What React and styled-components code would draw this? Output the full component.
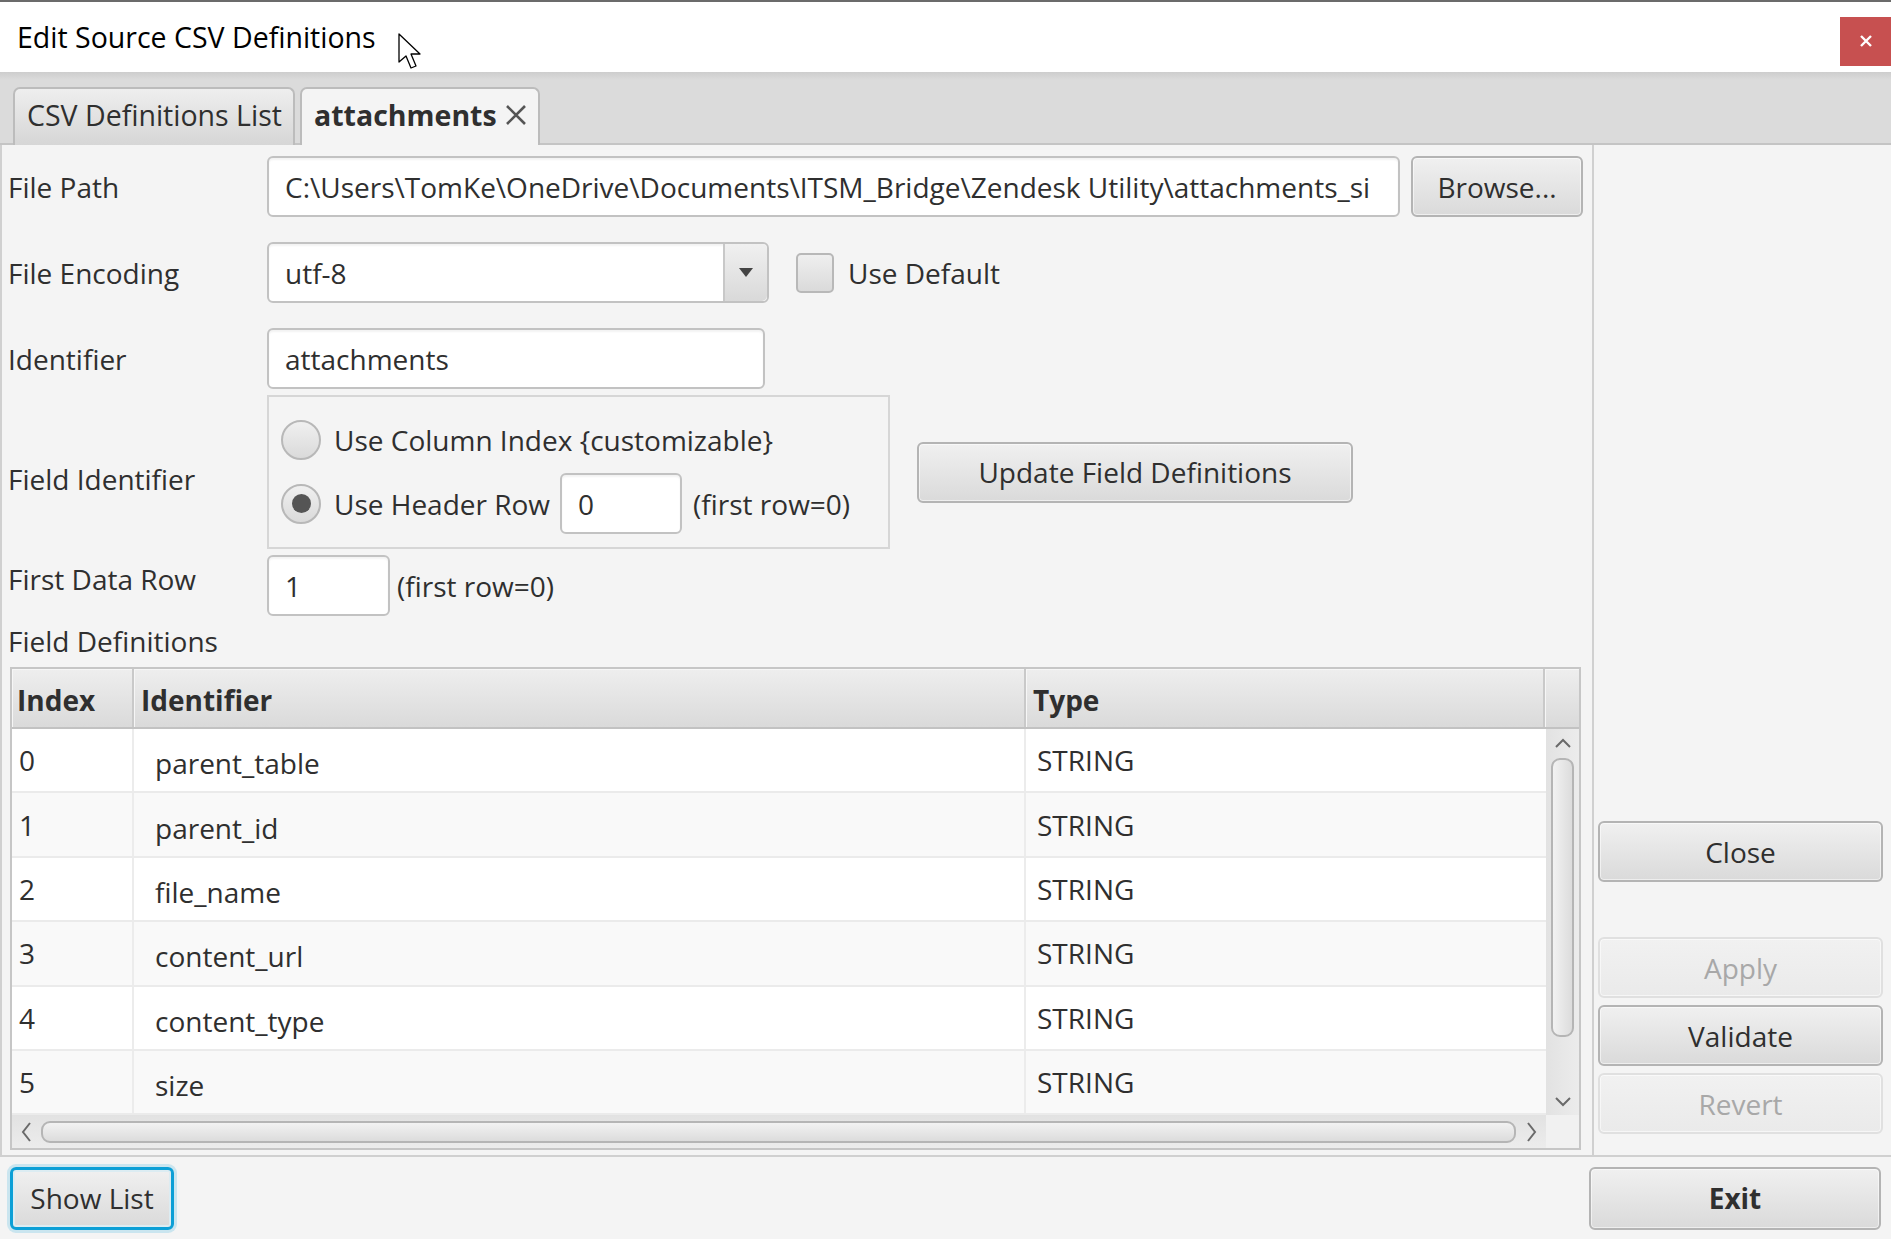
import React from 'react';
import styled, { createGlobalStyle, css } from 'styled-components';

const GlobalStyle = createGlobalStyle`
  html, body {
    margin: 0;
    padding: 0;
  }
  body {
    background: #f4f4f4;
    font-family: "Open Sans", "Noto Sans", sans-serif;
    font-size: 28px;
    color: #2f2f2f;
  }
  * { box-sizing: border-box; }
`;

const Window = styled.div`
  width: 1891px;
  height: 1239px;
  display: flex;
  flex-direction: column;
  border-top: 2px solid #6b6b6b;
  background: #f4f4f4;
  overflow: hidden;
`;

const TitleBar = styled.div`
  position: relative;
  flex: none;
  height: 70px;
  display: flex;
  align-items: center;
  padding-left: 17px;
  background: #fff;
`;

const Title = styled.div`
  flex: 1;
  color: #000;
  font-size: 28.5px;
`;

const WinClose = styled.div`
  width: 51px;
  height: 49px;
  margin-top: 8px;
  display: flex;
  align-items: center;
  justify-content: center;
  background: #c75050;
`;

const Pointer = styled.svg`
  position: absolute;
  left: 398px;
  top: 31px;
`;

const TabStrip = styled.div`
  flex: none;
  height: 73px;
  display: flex;
  align-items: flex-end;
  gap: 5px;
  padding-left: 13px;
  background: linear-gradient(to bottom, #cdcdcd 0px, #dbdbdb 8px, #dbdbdb 100%);
  border-bottom: 2px solid #c4c4c4;
`;

const Tab = styled.div`
  height: 58px;
  margin-bottom: -2px;
  display: flex;
  align-items: center;
  gap: 8px;
  padding: 0 0 4px 12px;
  border: 2px solid #bcbcbc;
  border-bottom: none;
  border-radius: 7px 7px 0 0;
  font-size: 28.5px;
  white-space: nowrap;
  ${p => p.$active ? css`
    width: 240px;
    background: #f4f4f4;
    font-weight: 700;
  ` : css`
    width: 282px;
    background: linear-gradient(to bottom, #eeeeee, #d6d6d6);
  `}
`;

const Body = styled.div`
  flex: none;
  height: 1010px;
  display: flex;
`;

const LeftPane = styled.div`
  width: 1594px;
  display: flex;
  flex-direction: column;
  padding-left: 6px;
  border-left: 2px solid #d0d0d0;
  border-right: 2px solid #d0d0d0;
`;

const Row = styled.div`
  display: flex;
  align-items: center;
  margin-top: ${p => p.$top || 0}px;
`;

const Label = styled.div`
  width: 259px;
  flex: none;
  margin-top: ${p => p.$shift || 0}px;
`;

const fieldLook = css`
  height: 61px;
  display: flex;
  align-items: center;
  background: #fff;
  border: 2px solid #c2c2c2;
  border-radius: 6px;
  box-shadow: inset 0 2px 2px rgba(0, 0, 0, 0.05);
`;

const TextField = styled.div`
  ${fieldLook}
  width: ${p => p.$w}px;
  padding: 0 16px;
  overflow: hidden;
  white-space: nowrap;
  flex: none;
`;

const Clip = styled.span`
  display: block;
  overflow: hidden;
`;

const Combo = styled.div`
  ${fieldLook}
  width: 502px;
  padding-left: 16px;
  flex: none;
`;

const ComboValue = styled.div`
  flex: 1;
`;

const ComboArrow = styled.div`
  width: 44px;
  height: 100%;
  display: flex;
  align-items: center;
  justify-content: center;
  border-left: 2px solid #c8c8c8;
  border-radius: 0 5px 5px 0;
  background: linear-gradient(to bottom, #f0f0f0, #d9d9d9);
`;

const CheckBox = styled.div`
  width: 38px;
  height: 40px;
  margin-left: 27px;
  border: 2px solid #b8b8b8;
  border-radius: 5px;
  background: linear-gradient(to bottom, #efefef, #dadada);
`;

const Text = styled.span`
  margin-left: ${p => p.$left || 0}px;
  white-space: nowrap;
`;

const Button = styled.div`
  height: 61px;
  display: flex;
  align-items: center;
  justify-content: center;
  flex: none;
  border: 2px solid #b4b4b4;
  border-radius: 6px;
  background: linear-gradient(to bottom, #f0f0f0, #dadada);
  box-shadow: inset 0 0 0 1px rgba(255, 255, 255, 0.55);
  color: #2f2f2f;
  white-space: nowrap;
  ${p => p.$w && css`width: ${p.$w}px;`}
  ${p => p.$bold && css`font-weight: 700;`}
  ${p => p.$disabled && css`
    border-color: #e0e0e0;
    background: linear-gradient(to bottom, #f1f1f1, #eaeaea);
    color: #a8a8a8;
  `}
  ${p => p.$focused && css`
    border: 3px solid #0c9fd6;
    box-shadow: 0 0 0 3px rgba(12, 159, 214, 0.18), inset 0 0 0 2px #dcecf2;
  `}
`;

const Group = styled.div`
  width: 623px;
  height: 154px;
  flex: none;
  display: flex;
  flex-direction: column;
  gap: 13px;
  padding: 23px 12px 0;
  border: 2px solid #d6d6d6;
`;

const RadioRow = styled.div`
  display: flex;
  align-items: center;
`;

const Radio = styled.div`
  width: 40px;
  height: 40px;
  flex: none;
  display: flex;
  align-items: center;
  justify-content: center;
  margin-right: 13px;
  border: 2px solid #b8b8b8;
  border-radius: 50%;
  background: linear-gradient(to bottom, #f0f0f0, #dadada);

  &::after {
    content: "";
    display: ${p => p.$on ? 'block' : 'none'};
    width: 19px;
    height: 19px;
    border-radius: 50%;
    background: #555;
  }
`;

const SectionTitle = styled.div`
  height: 36px;
  display: flex;
  align-items: center;
  margin-top: 7px;
`;

const Table = styled.div`
  width: 1571px;
  height: 483px;
  margin: 8px 0 0 2px;
  display: flex;
  flex-direction: column;
  border: 2px solid #c6c6c6;
  background: #fff;
`;

const HeaderRow = styled.div`
  height: 60px;
  flex: none;
  display: flex;
  border-bottom: 2px solid #c2c2c2;
`;

const HeadCell = styled.div`
  width: ${p => p.$w ? `${p.$w}px` : 'auto'};
  flex: ${p => p.$w ? 'none' : 1};
  display: flex;
  align-items: center;
  padding: 4px 0 0 ${p => p.$pad || 5}px;
  border-right: 2px solid #c9c9c9;
  background: linear-gradient(to bottom, #eeeeee, #dadada);
  box-shadow: inset 1px 1px 0 #f6f6f6;
  font-weight: 700;

  &:last-child { border-right: none; }
`;

const BodyArea = styled.div`
  flex: 1;
  display: flex;
  min-height: 0;
`;

const Rows = styled.div`
  flex: 1;
  overflow: hidden;
`;

const DataRow = styled.div`
  height: 64.4px;
  display: flex;
  border-bottom: 2px solid #ebebeb;
  background: ${p => p.$odd ? '#f9f9f9' : '#fff'};
`;

const Cell = styled.div`
  width: ${p => p.$w}px;
  flex: none;
  display: flex;
  align-items: center;
  padding-left: ${p => p.$pad}px;
  padding-top: ${p => p.$drop || 0}px;
  border-right: 2px solid #ececec;

  &:last-child { border-right: none; }
`;

const VScroll = styled.div`
  width: 33px;
  flex: none;
  display: flex;
  flex-direction: column;
  align-items: center;
  padding: 2px 0;
  background: linear-gradient(to right, #e2e2e2, #ececec);
`;

const HScrollBar = styled.div`
  height: 33px;
  flex: none;
  display: flex;
  align-items: center;
  background: linear-gradient(to bottom, #e2e2e2, #ececec);
`;

const ArrowSlot = styled.div`
  width: ${p => p.$w || 29}px;
  height: ${p => p.$h || 29}px;
  flex: none;
  display: flex;
  align-items: center;
  justify-content: center;
`;

const Thumb = styled.div`
  border: 2px solid #b5b5b5;
  border-radius: 9px;
  ${p => p.$vertical ? css`
    width: 23px;
    height: 279px;
    margin-top: 3px;
    background: linear-gradient(to right, #f2f2f2, #dcdcdc);
  ` : css`
    flex: 1;
    height: 22px;
    background: linear-gradient(to bottom, #f2f2f2, #dcdcdc);
  `}
`;

const Spacer = styled.div`
  flex: 1;
`;

const ScrollCorner = styled.div`
  width: 33px;
  height: 100%;
  flex: none;
  background: #f1f1f1;
`;

const RightPane = styled.div`
  flex: 1;
  display: flex;
  flex-direction: column;
  padding: 676px 0 0 4px;
`;

const SideButton = styled(Button)`
  width: 285px;
  margin-top: ${p => p.$top || 0}px;
`;

const BottomBar = styled.div`
  flex: 1;
  display: flex;
  align-items: center;
  justify-content: space-between;
  padding: 0 10px;
  border-top: 2px solid #d0d0d0;
`;

const Chevron = ({ dir }) => {
  const paths = {
    up: 'M2 9 L9 2 L16 9',
    down: 'M2 2 L9 9 L16 2',
    left: 'M9 2 L2 11 L9 20',
    right: 'M2 2 L9 11 L2 20',
  };
  const vertical = dir === 'up' || dir === 'down';
  return (
    <svg width={vertical ? 18 : 11} height={vertical ? 11 : 22} viewBox={vertical ? '0 0 18 11' : '0 0 11 22'}>
      <path d={paths[dir]} fill="none" stroke="#6a6a6a" strokeWidth="2" />
    </svg>
  );
};

const fields = [
  { index: 0, name: 'parent_table', type: 'STRING' },
  { index: 1, name: 'parent_id', type: 'STRING' },
  { index: 2, name: 'file_name', type: 'STRING' },
  { index: 3, name: 'content_url', type: 'STRING' },
  { index: 4, name: 'content_type', type: 'STRING' },
  { index: 5, name: 'size', type: 'STRING' },
];

export default function App() {
  return (
    <>
      <GlobalStyle />
      <Window>
        <TitleBar>
          <Title>Edit Source CSV Definitions</Title>
          <WinClose>
            <svg width="14" height="14" viewBox="0 0 14 14">
              <path d="M2 2 L12 12 M12 2 L2 12" stroke="#fff" strokeWidth="2.4" />
            </svg>
          </WinClose>
          <Pointer width="26" height="38" viewBox="0 0 26 38">
            <path d="M1 1 L1 29 L8 23 L13 35 L18 33 L13 21 L22 21 Z" fill="#fff" stroke="#000" strokeWidth="1.3" strokeLinejoin="round" />
          </Pointer>
        </TitleBar>

        <TabStrip>
          <Tab>CSV Definitions List</Tab>
          <Tab $active>
            attachments
            <svg width="22" height="22" viewBox="0 0 22 22">
              <path d="M2 2 L20 20 M20 2 L2 20" stroke="#555" strokeWidth="2.6" />
            </svg>
          </Tab>
        </TabStrip>

        <Body>
          <LeftPane>
            <Row $top={11}>
              <Label>File Path</Label>
              <TextField $w={1133}>
                <Clip>C:\Users\TomKe\OneDrive\Documents\ITSM_Bridge\Zendesk Utility\attachments_si</Clip>
              </TextField>
              <Button $w={172} style={{ marginLeft: 11 }}>Browse...</Button>
            </Row>

            <Row $top={25}>
              <Label>File Encoding</Label>
              <Combo>
                <ComboValue>utf-8</ComboValue>
                <ComboArrow>
                  <svg width="14" height="9" viewBox="0 0 14 9">
                    <path d="M0 0 L14 0 L7 9 Z" fill="#444" />
                  </svg>
                </ComboArrow>
              </Combo>
              <CheckBox />
              <Text $left={14}>Use Default</Text>
            </Row>

            <Row $top={25}>
              <Label>Identifier</Label>
              <TextField $w={498}>attachments</TextField>
            </Row>

            <Row $top={6}>
              <Label $shift={14}>Field Identifier</Label>
              <Group>
                <RadioRow>
                  <Radio />
                  <Text>Use Column Index {'{customizable}'}</Text>
                </RadioRow>
                <RadioRow>
                  <Radio $on />
                  <Text>Use Header Row</Text>
                  <TextField $w={122} style={{ marginLeft: 10 }}>0</TextField>
                  <Text $left={11}>(first row=0)</Text>
                </RadioRow>
              </Group>
              <Button $w={436} style={{ marginLeft: 27 }}>Update Field Definitions</Button>
            </Row>

            <Row $top={6}>
              <Label $shift={-14}>First Data Row</Label>
              <TextField $w={123}>1</TextField>
              <Text $left={7}>(first row=0)</Text>
            </Row>

            <SectionTitle>Field Definitions</SectionTitle>

            <Table>
              <HeaderRow>
                <HeadCell $w={122} $pad={5}>Index</HeadCell>
                <HeadCell $w={892} $pad={7}>Identifier</HeadCell>
                <HeadCell $w={519} $pad={7}>Type</HeadCell>
                <HeadCell />
              </HeaderRow>
              <BodyArea>
                <Rows>
                  {fields.map(f => (
                    <DataRow key={f.index} $odd={f.index % 2 === 1}>
                      <Cell $w={122} $pad={7}>{f.index}</Cell>
                      <Cell $w={892} $pad={21} $drop={6}>{f.name}</Cell>
                      <Cell $w={519} $pad={11}>{f.type}</Cell>
                    </DataRow>
                  ))}
                </Rows>
                <VScroll>
                  <ArrowSlot $w={33} $h={24}><Chevron dir="up" /></ArrowSlot>
                  <Thumb $vertical />
                  <Spacer />
                  <ArrowSlot $w={33} $h={24}><Chevron dir="down" /></ArrowSlot>
                </VScroll>
              </BodyArea>
              <HScrollBar>
                <ArrowSlot $w={29} $h={33}><Chevron dir="left" /></ArrowSlot>
                <Thumb />
                <ArrowSlot $w={30} $h={33}><Chevron dir="right" /></ArrowSlot>
                <ScrollCorner />
              </HScrollBar>
            </Table>
          </LeftPane>

          <RightPane>
            <SideButton>Close</SideButton>
            <SideButton $top={55} $disabled>Apply</SideButton>
            <SideButton $top={7}>Validate</SideButton>
            <SideButton $top={7} $disabled>Revert</SideButton>
          </RightPane>
        </Body>

        <BottomBar>
          <Button $w={164} $focused style={{ height: 63 }}>Show List</Button>
          <Button $w={292} $bold style={{ height: 63 }}>Exit</Button>
        </BottomBar>
      </Window>
    </>
  );
}
